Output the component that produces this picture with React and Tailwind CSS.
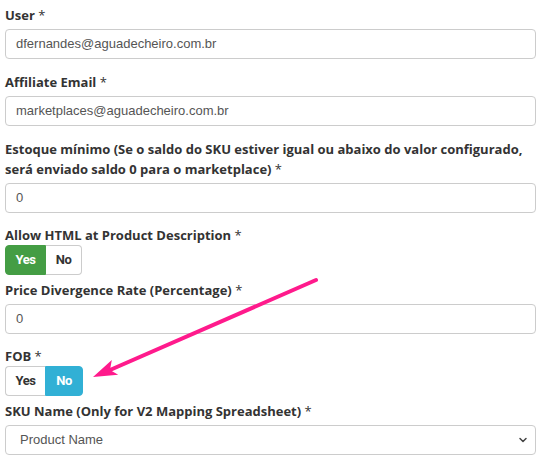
import { ChevronDown } from 'lucide-react';

// Formulário de configuração do marketplace

const labelCls = "block text-[13px] leading-[20px] font-bold text-[#333] [font-family:'Open_Sans',sans-serif]";
const inputCls = "h-[30px] w-full rounded-[4px] border border-[#ccc] bg-white px-[10px] text-[13px] text-[#555] [font-family:'Liberation_Sans',Arial,sans-serif] flex items-center";

function Field({ label, value }) {
  return (
    <div className="flex flex-col">
      <label className={`${labelCls} mb-[4px]`}>
        {label} <span className="font-normal">*</span>
      </label>
      <div className={inputCls}>{value}</div>
    </div>
  );
}

function Toggle({ label, yes }) {
  const base = "h-[30px] flex items-center justify-center text-[13px] font-bold tracking-[-0.4px] [font-family:'Roboto',sans-serif]";
  return (
    <div className="flex flex-col">
      <label className={`${labelCls} !leading-[19px]`}>
        {label} <span className="font-normal">*</span>
      </label>
      <div className="flex w-fit">
        <div
          className={`${base} rounded-l-[4px] ${yes ? 'w-[41px] bg-[#449d44] text-white border border-[#449d44]' : 'w-[40px] bg-white text-[#333] border border-[#ccc] border-r-0'}`}
        >
          Yes
        </div>
        <div
          className={`${base} rounded-r-[4px] ${yes ? 'w-[36px] bg-white text-[#333] border border-[#ccc] border-l-0' : 'w-[38px] bg-[#31b0d5] text-white border border-[#31b0d5]'}`}
        >
          No
        </div>
      </div>
    </div>
  );
}

export default function App() {
  return (
    <div className="relative w-[548px] h-[462px] bg-white overflow-hidden">
      <div className="w-[531px] ml-[5px] pt-[5px] flex flex-col">
        <Field label="User" value="dfernandes@aguadecheiro.com.br" />
        <div className="h-[13px]" />
        <Field label="Affiliate Email" value="marketplaces@aguadecheiro.com.br" />
        <div className="h-[13px]" />
        <Field
          label="Estoque mínimo (Se o saldo do SKU estiver igual ou abaixo do valor configurado, será enviado saldo 0 para o marketplace)"
          value="0"
        />
        <div className="h-[13px]" />
        <Toggle label="Allow HTML at Product Description" yes />
        <div className="h-[5px]" />
        <Field label="Price Divergence Rate (Percentage)" value="0" />
        <div className="h-[13px]" />
        <Toggle label="FOB" yes={false} />
        <div className="h-[5px]" />
        <div className="flex flex-col">
          <label className={`${labelCls} mb-[4px]`}>
            SKU Name (Only for V2 Mapping Spreadsheet) <span className="font-normal">*</span>
          </label>
          <div className={`${inputCls} justify-between pl-[14px] pr-[6px]`}>
            <span>Product Name</span>
            <ChevronDown className="w-[12px] h-[12px] text-[#444]" strokeWidth={3} />
          </div>
        </div>
      </div>

      {/* Seta de destaque */}
      <svg className="absolute inset-0 pointer-events-none" width="548" height="462">
        <line x1="316" y1="280" x2="110" y2="370" stroke="#ff1a8c" strokeWidth="4" strokeLinecap="round" />
        <polygon points="93,377 111.8,360.1 110,370 118.2,374.7" fill="#ff1a8c" />
      </svg>
    </div>
  );
}
